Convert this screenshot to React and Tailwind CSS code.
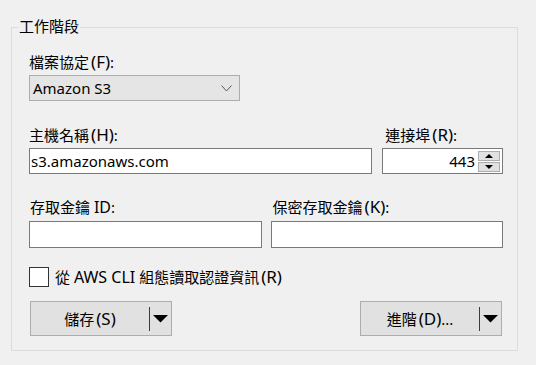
import React from "react";

const font = { fontFamily: "'Noto Sans', 'Noto Sans CJK TC', sans-serif" };

function Acc({ k }) {
  return <span className="ml-[2px] text-[17px] leading-[20px]">({k})</span>;
}

function SplitButton({ children }) {
  return (
    <div className="flex h-[35px] w-[142px] items-center border border-[#adadad] bg-[#e1e1e1]">
      <div className="flex flex-1 items-center justify-center text-[15px] leading-[20px] text-black">
        {children}
      </div>
      <div className="h-[24px] w-px bg-[#3c3c3c]" />
      <div className="flex w-[21px] items-center justify-center">
        <svg width="15" height="8" viewBox="0 0 15 8">
          <polygon points="0,0 15,0 7.5,7.5" fill="#000" />
        </svg>
      </div>
    </div>
  );
}

export default function App() {
  return (
    <div
      className="h-[365px] w-[536px] bg-[#f0f0f0] pl-[11px] pt-[27px] text-black"
      style={font}
    >
      <div className="relative h-[324px] w-[507px] border border-[#dcdcdc] pl-[17px] pr-[14px] pt-[24px]">
        <span className="absolute left-[6px] top-[-12px] bg-[#f0f0f0] px-px text-[15px] leading-[20px]">
          工作階段
        </span>

        <div className="text-[15px] leading-[20px]">
          檔案協定<Acc k="F" />:
        </div>
        <div className="mt-[3px] flex h-[26px] w-[211px] items-center justify-between border border-[#adadad] bg-[#e5e5e5] pl-[3px] pr-[7px]">
          <span className="text-[15px] leading-[20px]">Amazon S3</span>
          <svg width="11" height="7" viewBox="0 0 11 7">
            <polyline points="0.5,0.5 5.5,6 10.5,0.5" fill="none" stroke="#5a5a5a" strokeWidth="1" />
          </svg>
        </div>

        <div className="mt-[24px] flex gap-[10px]">
          <div className="flex w-[344px] flex-col">
            <div className="text-[15px] leading-[20px]">
              主機名稱<Acc k="H" />:
            </div>
            <div className="mt-[3px] flex h-[26px] items-center border border-[#7a7a7a] bg-white pl-[1px]">
              <span className="text-[15px] leading-[20px]">s3.amazonaws.com</span>
            </div>
          </div>
          <div className="flex w-[121px] flex-col">
            <div className="pl-[3px] text-[15px] leading-[20px]">
              連接埠<Acc k="R" />:
            </div>
            <div className="mt-[3px] flex h-[26px] items-center border border-[#7a7a7a] bg-white pr-[2px]">
              <span className="flex-1 pr-[3px] text-right text-[15px] leading-[20px]">443</span>
              <div className="flex w-[22px] flex-col gap-px">
                <div className="flex h-[10px] items-center justify-center border border-[#adadad] bg-[#e1e1e1]">
                  <svg width="8" height="4" viewBox="0 0 8 4">
                    <polygon points="0,4 8,4 4,0" fill="#000" />
                  </svg>
                </div>
                <div className="flex h-[10px] items-center justify-center border border-[#adadad] bg-[#e1e1e1]">
                  <svg width="8" height="4" viewBox="0 0 8 4">
                    <polygon points="0,0 8,0 4,4" fill="#000" />
                  </svg>
                </div>
              </div>
            </div>
          </div>
        </div>

        <div className="mt-[23px] flex gap-[9px]">
          <div className="flex w-[233px] flex-col">
            <div className="pl-px text-[15px] leading-[20px]">
              存取金鑰 <span className="text-[16px]">ID</span>:
            </div>
            <div className="mt-[4px] h-[27px] border border-[#7a7a7a] bg-white" />
          </div>
          <div className="flex w-[233px] flex-col">
            <div className="pl-[2px] text-[15px] leading-[20px]">
              保密存取金鑰<Acc k="K" />:
            </div>
            <div className="mt-[4px] h-[27px] border border-[#7a7a7a] bg-white" />
          </div>
        </div>

        <div className="mt-[19px] flex items-center">
          <div className="h-[20px] w-[20px] border border-[#333333] bg-white" />
          <span className="ml-[6px] text-[15px] leading-[20px]">
            從 <span className="text-[16px]">AWS CLI</span> 組態讀取認證資訊<Acc k="R" />
          </span>
        </div>

        <div className="mt-[14px] flex justify-between px-px">
          <SplitButton>
            儲存<Acc k="S" />
          </SplitButton>
          <SplitButton>
            進階<Acc k="D" />...
          </SplitButton>
        </div>
      </div>
    </div>
  );
}
